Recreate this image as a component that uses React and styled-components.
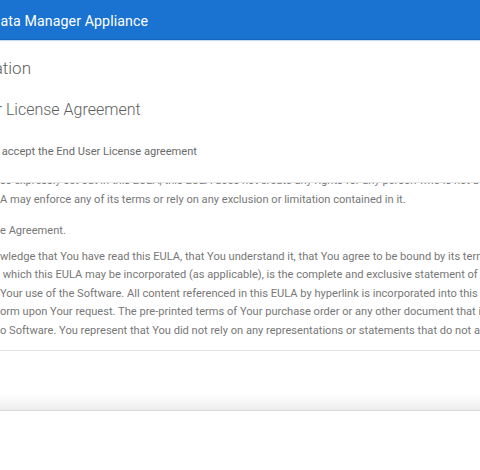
import React from "react";
import styled, { createGlobalStyle } from "styled-components";

const GlobalStyle = createGlobalStyle`
  html, body {
    margin: 0;
    padding: 0;
    background: #ffffff;
  }
  body {
    font-family: Roboto, "Liberation Sans", Arial, sans-serif;
    overflow: hidden;
  }
`;

const Viewport = styled.div`
  width: 100vw;
  height: 470px;
  overflow: hidden;
  background: #fff;
`;

// the screenshot is a crop, so the page is slid to the left
const Page = styled.div`
  width: 680px;
  margin-left: -80px;
`;

const TopBar = styled.header`
  height: 40px;
  background: #1a73d1;
  border-bottom: 1px solid #1565c0;
  box-shadow: 0 1px 1px rgba(25, 118, 210, 0.25);
  display: flex;
  align-items: center;
  padding: 2px 0 0 71px;
  box-sizing: border-box;
`;

const Brand = styled.div`
  color: #fff;
  font-size: 14.2px;
  font-weight: 400;
  letter-spacing: 0.1px;
`;

const Main = styled.main`
  display: flex;
  flex-direction: column;
`;

const Heading = styled.h1`
  margin: ${(p) => p.$top}px 0 0 ${(p) => p.$indent}px;
  font-size: ${(p) => p.$size}px;
  line-height: 24px;
  font-weight: 300;
  color: #5e5e5e;
`;

const CheckRow = styled.label`
  display: flex;
  align-items: center;
  gap: 8px;
  margin: 21px 0 0 54px;
  height: 18px;
`;

const CheckBox = styled.span`
  width: 14px;
  height: 14px;
  border: 1px solid #9e9e9e;
  border-radius: 2px;
  box-sizing: border-box;
`;

const CheckLabel = styled.span`
  font-size: 11.1px;
  line-height: 18px;
  color: #6a6a6a;
`;

const EulaBox = styled.div`
  margin-top: 21px;
  height: 167px;
  border-top: 1px solid #e4e4e4;
  border-bottom: 1px solid #e4e4e4;
  overflow: hidden;
`;

const EulaText = styled.div`
  margin-top: -11px;
  padding-left: 80px;
  font-size: 11.1px;
  line-height: 18.6px;
  color: #777;
`;

const Para = styled.p`
  margin: 0 0 ${(p) => p.$gap}px;
`;

const Line = styled.span`
  display: block;
  white-space: pre;
`;

const Footer = styled.div`
  margin-top: 43px;
  height: 16px;
  background: linear-gradient(to bottom, #ffffff, #ececec);
  border-bottom: 1px solid #d9d9d9;
`;

const eula = [
  {
    gap: 12.4,
    lines: [
      "ss expressly set out in this EULA, this EULA does not create any rights for any person who is not a party to it, and no person",
      "A may enforce any of its terms or rely on any exclusion or limitation contained in it.",
    ],
  },
  { gap: 7.4, lines: ["e Agreement."] },
  {
    gap: 0,
    lines: [
      "wledge that You have read this EULA, that You understand it, that You agree to be bound by its terms, and",
      " which this EULA may be incorporated (as applicable), is the complete and exclusive statement of the",
      "Your use of the Software. All content referenced in this EULA by hyperlink is incorporated into this EULA",
      "orm upon Your request. The pre-printed terms of Your purchase order or any other document that is",
      "o Software. You represent that You did not rely on any representations or statements that do not appear",
    ],
  },
];

export default function App() {
  return (
    <Viewport>
      <GlobalStyle />
      <Page>
        <TopBar>
          <Brand>Data Manager Appliance</Brand>
        </TopBar>
        <Main>
          <Heading $top={16} $indent={29} $size={17}>
            Installation
          </Heading>
          <Heading as="h2" $top={18} $indent={19} $size={16}>
            End User License Agreement
          </Heading>
          <CheckRow>
            <CheckBox />
            <CheckLabel>I accept the End User License agreement</CheckLabel>
          </CheckRow>
          <EulaBox>
            <EulaText>
              {eula.map((p, i) => (
                <Para key={i} $gap={p.gap}>
                  {p.lines.map((l, j) => (
                    <Line key={j}>{l}</Line>
                  ))}
                </Para>
              ))}
            </EulaText>
          </EulaBox>
          <Footer />
        </Main>
      </Page>
    </Viewport>
  );
}
